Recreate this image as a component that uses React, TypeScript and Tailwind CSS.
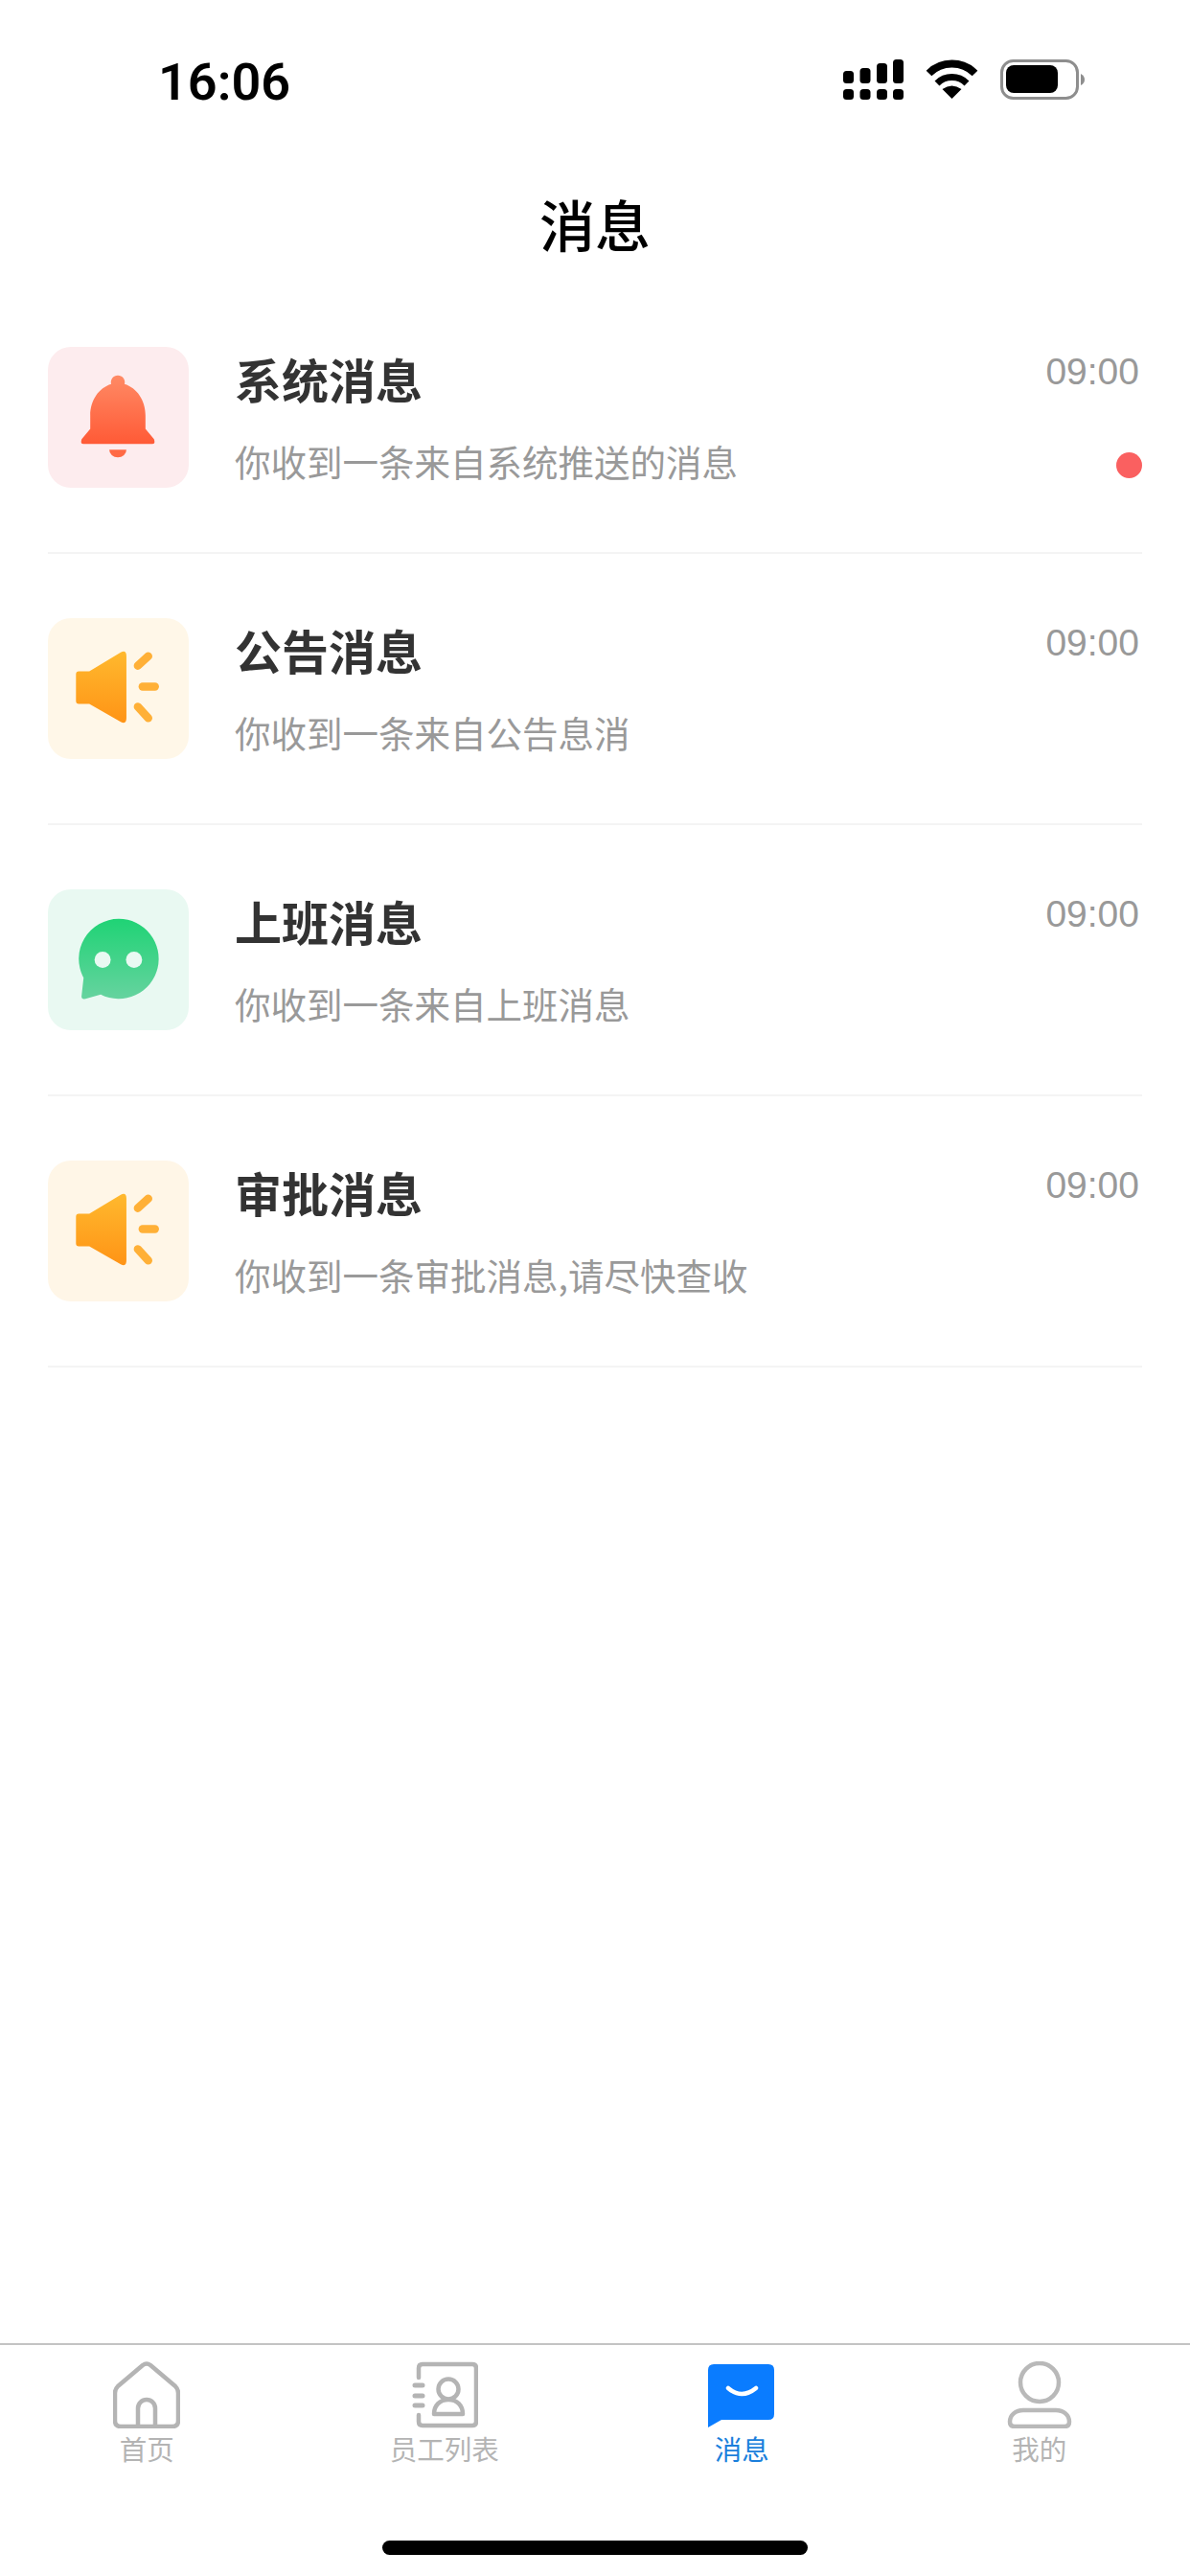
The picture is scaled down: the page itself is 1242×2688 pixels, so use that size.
import type { ReactNode } from "react";

const BellIcon = () => (
  <svg viewBox="0 0 147 148" className="size-full">
    <defs>
      <linearGradient id="bell" x1="0" y1="0" x2="0" y2="1">
        <stop offset="0" stopColor="#ff8a65" />
        <stop offset="1" stopColor="#ff5a36" />
      </linearGradient>
    </defs>
    <path
      d="M73 30a7 7 0 0 1 7 9C93 43 102 56 102 72V86L111 97Q113 102 109 102H37Q33 102 35 97L44 86V72C44 56 53 43 66 39a7 7 0 0 1 7-9Z"
      fill="url(#bell)"
    />
    <path d="M64 108H82A9 8 0 0 1 64 108Z" fill="#ff6a45" />
  </svg>
);

const SpeakerIcon = ({ id }: { id: string }) => (
  <svg viewBox="0 0 147 148" className="size-full">
    <defs>
      <linearGradient id={id} x1="0" y1="0" x2="0" y2="1">
        <stop offset="0" stopColor="#ffb92e" />
        <stop offset="1" stopColor="#ff9416" />
      </linearGradient>
    </defs>
    <path
      d="M32 56H43L76 36Q82 33 82 40V105Q82 112 76 109L43 90H32Q29 90 29 87V59Q29 56 32 56Z"
      fill={`url(#${id})`}
    />
    <g stroke="#ffb037" strokeWidth="8.5" strokeLinecap="round">
      <path d="M94 50L105 40" />
      <path d="M99 72H112" />
      <path d="M94 93L105 105" />
    </g>
  </svg>
);

const ChatIcon = () => (
  <svg viewBox="0 0 147 148" className="size-full">
    <defs>
      <linearGradient id="chat" x1="0" y1="0" x2="0" y2="1">
        <stop offset="0" stopColor="#1fd375" />
        <stop offset="1" stopColor="#66d39f" />
      </linearGradient>
    </defs>
    <path
      d="M74 31A42 42 0 1 1 55 110.5L39 115Q34 116 35 111L37 93A42 42 0 0 1 74 31Z"
      fill="url(#chat)"
    />
    <circle cx="57" cy="74" r="8.5" fill="#e9f9f2" />
    <circle cx="90" cy="74" r="8.5" fill="#e9f9f2" />
  </svg>
);

const HomeIcon = () => (
  <svg viewBox="0 0 70 70" className="size-full" fill="none" stroke="#b4b4b4" strokeWidth="4.5" strokeLinejoin="round">
    <path d="M31 4Q35 1 39 4L65 26Q68 29 68 33V62Q68 68 62 68H8Q2 68 2 62V33Q2 29 5 26Z" />
    <path d="M26 68V49a9 9 0 0 1 18 0V68" />
  </svg>
);

const ContactsIcon = () => (
  <svg viewBox="0 0 70 70" className="size-full" fill="none" stroke="#b4b4b4" strokeWidth="4.5" strokeLinecap="round">
    <path d="M8 17V7Q8 3 12 3H64Q68 3 68 7V63Q68 67 64 67H12Q8 67 8 63V56" />
    <path d="M4 25H12M4 36H12M4 46H12" strokeWidth="5" />
    <circle cx="39" cy="29" r="10.5" />
    <path d="M24 55C24 46 30 40 39 40C48 40 54 46 54 55Z" strokeLinejoin="round" />
  </svg>
);

const MessageIcon = () => (
  <svg viewBox="0 0 70 70" className="size-full">
    <path d="M6 3H63Q69 3 69 9V55Q69 61 63 61H14L0 69V9Q0 3 6 3Z" fill="#0a7cff" />
    <path d="M21 28Q35 40 50 28" fill="none" stroke="#ffffff" strokeWidth="4.5" strokeLinecap="round" />
  </svg>
);

const MeIcon = () => (
  <svg viewBox="0 0 70 70" className="size-full" fill="none" stroke="#b9b9b9" strokeWidth="4.5">
    <circle cx="35" cy="22" r="20" />
    <path d="M9 68H61Q66 68 66 63C66 56 60 51 52 51H18C10 51 4 56 4 63Q4 68 9 68Z" />
  </svg>
);

const SignalIcon = () => (
  <svg viewBox="0 0 64 42" className="w-[64px] h-[42px]" fill="#000000">
    <rect x="0" y="12" width="11" height="13" rx="3.5" />
    <rect x="17.5" y="9" width="11" height="16" rx="3.5" />
    <rect x="35" y="4" width="11" height="21" rx="3.5" />
    <rect x="52" y="0" width="11" height="25" rx="3.5" />
    <rect x="0" y="31" width="11" height="11" rx="3.5" />
    <rect x="17.5" y="31" width="11" height="11" rx="3.5" />
    <rect x="35" y="31" width="11" height="11" rx="3.5" />
    <rect x="52" y="31" width="11" height="11" rx="3.5" />
  </svg>
);

const WifiIcon = () => (
  <svg viewBox="0 0 56 42" className="w-[56px] h-[42px]" fill="none" stroke="#000000">
    <path d="M3.5 14.5A34 34 0 0 1 51.5 14.5" strokeWidth="8" />
    <path d="M12 25A22 22 0 0 1 43 25" strokeWidth="7" />
    <path d="M27.5 41L17.5 31Q27.5 24 37.5 31Z" fill="#000000" stroke="none" />
  </svg>
);

const BatteryIcon = () => (
  <svg viewBox="0 0 88 42" className="w-[88px] h-[42px]">
    <rect x="1.5" y="1.5" width="79" height="39" rx="12" fill="none" stroke="#8e8e8e" strokeWidth="3" />
    <rect x="6" y="6" width="54" height="29" rx="8" fill="#000000" />
    <path d="M84 15Q88 17 88 21Q88 25 84 27Z" fill="#8e8e8e" />
  </svg>
);

type Row = {
  title: string;
  desc: string;
  tile: string;
  icon: ReactNode;
  unread?: boolean;
};

const rows: Row[] = [
  { title: "系统消息", desc: "你收到一条来自系统推送的消息", tile: "bg-[#fdecee]", icon: <BellIcon />, unread: true },
  { title: "公告消息", desc: "你收到一条来自公告息消", tile: "bg-[#fff7e8]", icon: <SpeakerIcon id="speakerA" /> },
  { title: "上班消息", desc: "你收到一条来自上班消息", tile: "bg-[#e9f9f2]", icon: <ChatIcon /> },
  { title: "审批消息", desc: "你收到一条审批消息,请尽快查收", tile: "bg-[#fff6e7]", icon: <SpeakerIcon id="speakerB" /> },
];

const tabs = [
  { label: "首页", icon: <HomeIcon /> },
  { label: "员工列表", icon: <ContactsIcon /> },
  { label: "消息", icon: <MessageIcon />, active: true },
  { label: "我的", icon: <MeIcon /> },
];

const App = () => {
  return (
    <div className="flex flex-col h-[2688px] w-[1242px] bg-white overflow-hidden font-['Noto_Sans_CJK_SC','Noto_Sans',sans-serif]">
      <div className="flex justify-between items-center h-[170px] pl-[165px] pr-[110px]">
        <span className="text-[54px] font-semibold text-black font-['Roboto',sans-serif]">16:06</span>
        <div className="flex items-center gap-[22px] -mt-[4px]">
          <SignalIcon />
          <WifiIcon />
          <BatteryIcon />
        </div>
      </div>

      <div className="flex justify-center items-center h-[125px]">
        <h1 className="text-[58px] leading-[70px] font-medium text-black">消息</h1>
      </div>

      <div className="flex-1">
        {rows.map((row) => (
          <div key={row.title} className="flex mx-[50px] h-[283px] pt-[67px] border-b-2 border-[#f4f4f4]">
            <div className={`size-[147px] shrink-0 rounded-[24px] ${row.tile}`}>{row.icon}</div>
            <div className="flex-1 ml-[48px]">
              <div className="-mt-[3px] text-[49px] leading-[72px] font-semibold text-[#333333]">{row.title}</div>
              <div className="mt-[25px] text-[37.5px] leading-[50px] text-[#999999]">{row.desc}</div>
            </div>
            <div className="flex flex-col items-end">
              <span className="pr-[3px] text-[39px] leading-[52px] text-[#999999] font-['Liberation_Sans',sans-serif]">09:00</span>
              {row.unread && <span className="size-[27px] mt-[58px] rounded-full bg-[#fa6060]" />}
            </div>
          </div>
        ))}
      </div>

      <div className="border-t-2 border-[#c4c4c4] h-[243px] flex flex-col">
        <div className="grid grid-cols-4 w-[1242px] -ml-[2px] pt-[17px]">
          {tabs.map((tab) => (
            <div key={tab.label} className="flex flex-col items-center">
              <div className="size-[70px]">{tab.icon}</div>
              <span className={`mt-[4px] text-[28.5px] leading-[34px] ${tab.active ? "text-[#1a7fdc]" : "text-[#b4b4b4]"}`}>
                {tab.label}
              </span>
            </div>
          ))}
        </div>
        <div className="mt-[79px] mx-auto w-[444px] h-[15px] rounded-full bg-black" />
      </div>
    </div>
  );
};

export default App;
